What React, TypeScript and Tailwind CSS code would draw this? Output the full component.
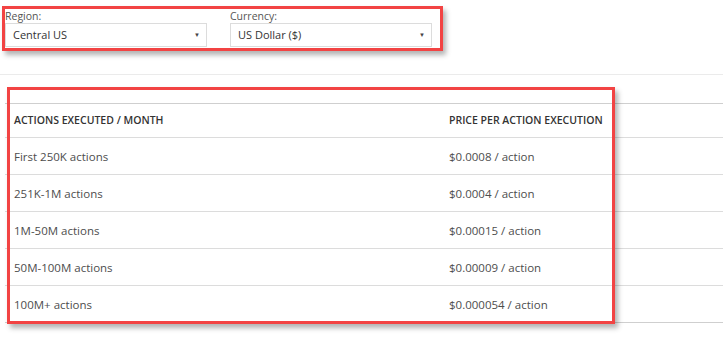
import React from "react";

const rows: [string, string][] = [
  ["First 250K actions", "$0.0008 / action"],
  ["251K-1M actions", "$0.0004 / action"],
  ["1M-50M actions", "$0.00015 / action"],
  ["50M-100M actions", "$0.00009 / action"],
  ["100M+ actions", "$0.000054 / action"],
];

function Select({ value }: { value: string }) {
  return (
    <div className="flex h-[24px] w-[202px] items-center justify-between border border-[#dcdcdc] bg-white pl-[7px] pr-[6px]">
      <span className="text-[11px] text-[#333]">{value}</span>
      <span className="text-[6px] leading-none text-[#444]">▼</span>
    </div>
  );
}

export default function App() {
  return (
    <div
      className="relative h-[347px] w-[723px] overflow-hidden bg-white"
      style={{ fontFamily: '"Open Sans", "Noto Sans", sans-serif' }}
    >
      {/* top filters */}
      <div className="ml-[2px] mt-[6px] w-[441px] border-[3px] border-[#f24343] shadow-[3px_4px_5px_rgba(0,0,0,0.3)]">
        <div className="flex gap-[23px]">
          <div className="flex flex-col">
            <span className="h-[14px] text-[10.5px] leading-[14px] text-[#555]">Region:</span>
            <Select value="Central US" />
          </div>
          <div className="flex flex-col">
            <span className="h-[14px] text-[10.5px] leading-[14px] text-[#555]">Currency:</span>
            <Select value="US Dollar ($)" />
          </div>
        </div>
        <div className="h-[1px]" />
      </div>

      <div className="mt-[23px] h-px w-full bg-[#ebebeb]" />

      {/* table */}
      <div className="relative mt-[28px] ml-[5px]">
        <div className="border-t border-[#cfcfcf]">
          <div className="grid h-[34px] grid-cols-[436px_1fr] items-center border-b border-[#dcdcdc] text-[10.5px] font-semibold text-[#333]">
            <span className="pl-[9px]">ACTIONS EXECUTED / MONTH</span>
            <span className="pl-[8px]">PRICE PER ACTION EXECUTION</span>
          </div>
          {rows.map(([a, b], i) => (
            <div
              key={a}
              className={
                i === rows.length - 1
                  ? "grid h-[37px] grid-cols-[436px_1fr] items-center border-b border-[#cfcfcf] text-[11.5px] text-[#4d4d4d]"
                  : "grid h-[37px] grid-cols-[436px_1fr] items-center border-b border-[#dcdcdc] text-[11.5px] text-[#4d4d4d]"
              }
            >
              <span className="pl-[9px] pt-[2px]">{a}</span>
              <span className="pl-[8px] pt-[2px]">{b}</span>
            </div>
          ))}
        </div>
        <div className="pointer-events-none absolute left-[2px] top-[-16px] h-[237px] w-[608px] border-[3px] border-[#f24343] shadow-[3px_4px_5px_rgba(0,0,0,0.3)]" />
      </div>
    </div>
  );
}
